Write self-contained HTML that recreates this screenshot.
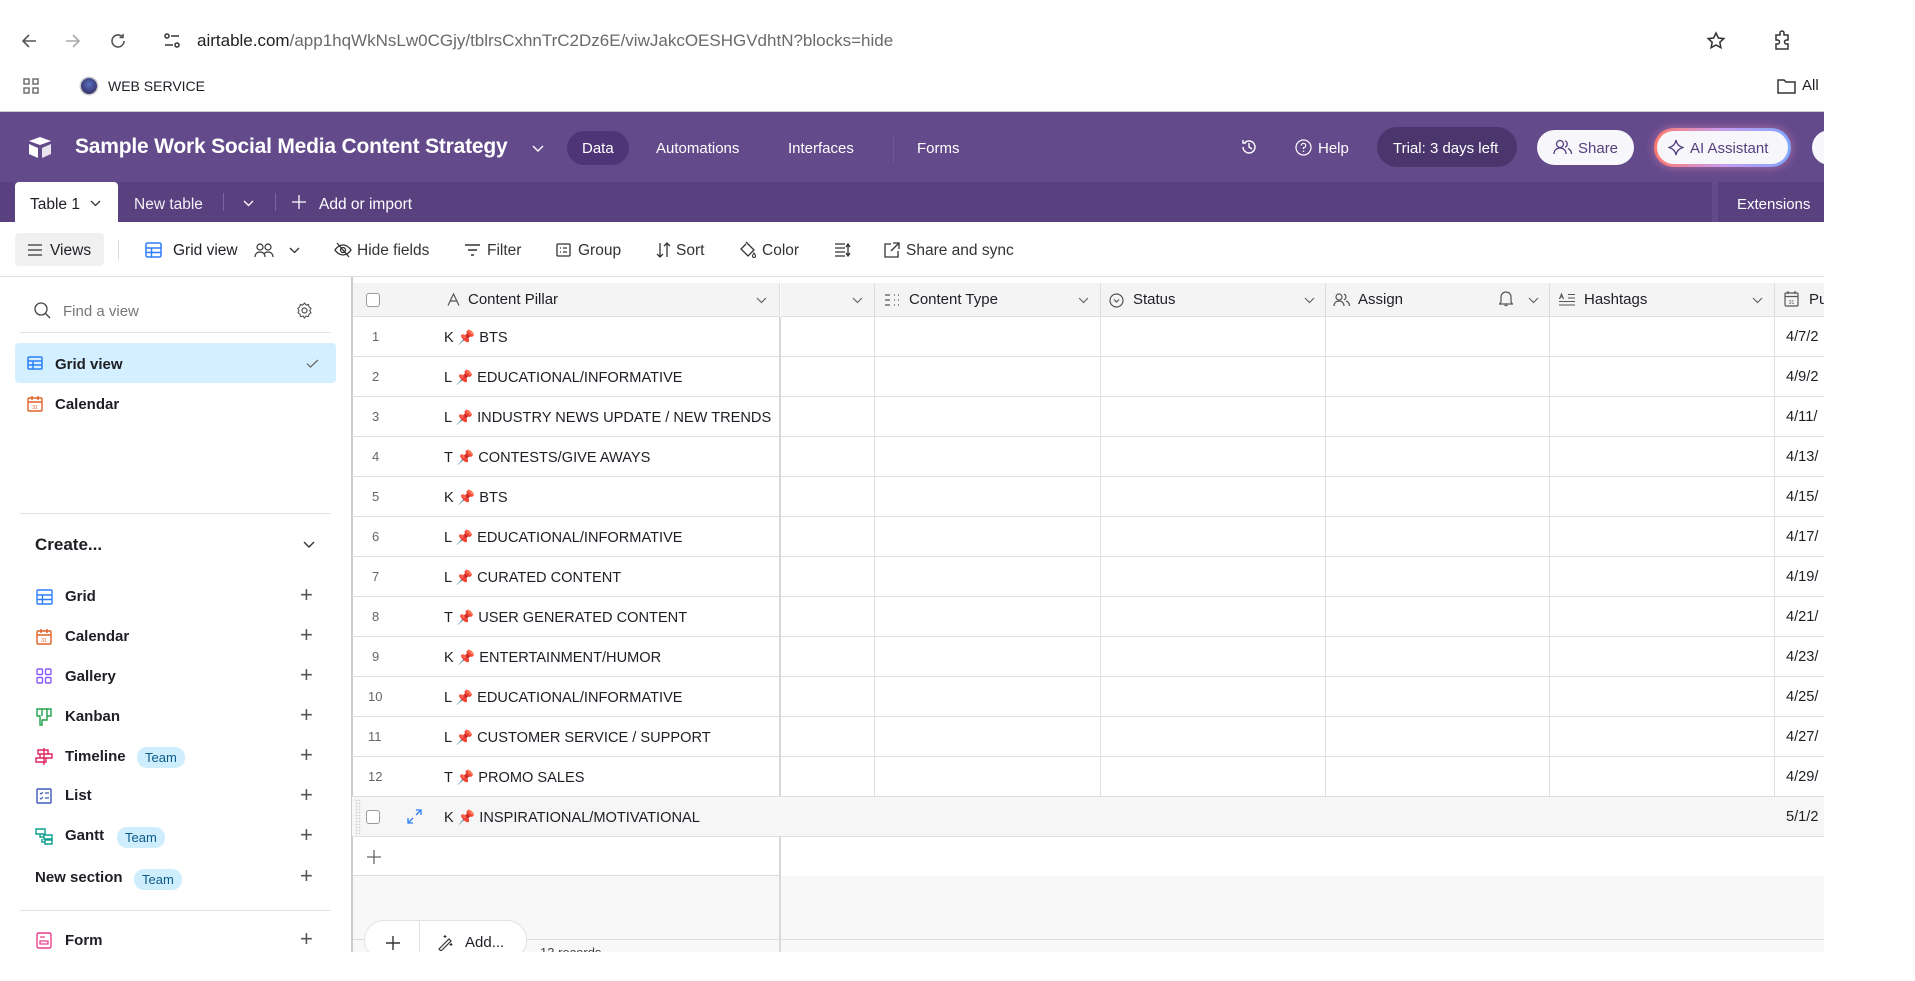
<!DOCTYPE html>
<html><head><meta charset="utf-8">
<style>
*{box-sizing:border-box;margin:0;padding:0}
body{width:1915px;height:981px;background:#fff;font-family:"Liberation Sans",sans-serif;color:#1d1f25;position:relative;overflow:hidden}
.a{position:absolute;white-space:nowrap}
.hdr{position:absolute;left:0;top:112px;width:1824px;height:70px;background:#634a8b}
.tabs{position:absolute;left:0;top:182px;width:1824px;height:40px;background:#594180}
.w{color:#fff}
.ico{position:absolute}
.col{position:absolute;top:283px;height:34px;background:#f4f4f4;border-right:1px solid #dedede;border-bottom:1px solid #dedede;font-size:14px;line-height:34px;color:#1d1f25}
.row{position:absolute;left:352px;width:1472px;height:40px;border-bottom:1px solid #e0e0e0;font-size:14px;line-height:40px}
.side{font-size:14px;color:#1d1f25}
.team{position:absolute;background:#cfeefd;color:#0b5c8a;font-size:13px;border-radius:10px;padding:0 8px;line-height:21px}
.plus{position:absolute;left:300px;font-size:22px;color:#555;font-weight:300}
.tb{position:absolute;top:242px;font-size:15.5px;color:#333;white-space:nowrap}
</style></head><body>

<!-- browser chrome -->
<svg class="ico" style="left:20px;top:32px" width="18" height="18" viewBox="0 0 18 18"><path d="M16 9H3M9 3L3 9l6 6" stroke="#555" stroke-width="1.6" fill="none"/></svg>
<svg class="ico" style="left:64px;top:32px" width="18" height="18" viewBox="0 0 18 18"><path d="M2 9h13M9 3l6 6-6 6" stroke="#aaa" stroke-width="1.6" fill="none"/></svg>
<svg class="ico" style="left:109px;top:32px" width="18" height="18" viewBox="0 0 18 18"><path d="M15 9a6 6 0 1 1-2-4.5M14 2v3.5h-3.5" stroke="#555" stroke-width="1.6" fill="none"/></svg>
<svg class="ico" style="left:163px;top:32px" width="18" height="18" viewBox="0 0 18 18"><circle cx="4" cy="4" r="2" fill="none" stroke="#333" stroke-width="1.5"/><path d="M8 4h8M2 13h8" stroke="#333" stroke-width="1.5"/><circle cx="14" cy="13" r="2" fill="none" stroke="#333" stroke-width="1.5"/></svg>
<div class="a" style="left:197px;top:31px;font-size:17px;color:#202124">airtable.com<span style="color:#6a6a6a">/app1hqWkNsLw0CGjy/tblrsCxhnTrC2Dz6E/viwJakcOESHGVdhtN?blocks=hide</span></div>
<svg class="ico" style="left:1706px;top:31px" width="20" height="20" viewBox="0 0 20 20"><path d="M10 2l2.4 5 5.4.6-4 3.7 1.1 5.4L10 14l-4.9 2.7 1.1-5.4-4-3.7 5.4-.6z" fill="none" stroke="#333" stroke-width="1.5"/></svg>
<svg class="ico" style="left:1772px;top:30px" width="20" height="22" viewBox="0 0 20 22"><path d="M4 5h4V3a2 2 0 0 1 4 0v2h4v5h-1.5a2 2 0 0 0 0 4H16v5H4v-5h1.5a2 2 0 0 0 0-4H4z" fill="none" stroke="#333" stroke-width="1.5"/></svg>
<svg class="ico" style="left:23px;top:78px" width="16" height="16" viewBox="0 0 16 16"><g fill="none" stroke="#666" stroke-width="1.4"><rect x="1" y="1" width="5" height="5"/><rect x="10" y="1" width="5" height="5"/><rect x="1" y="10" width="5" height="5"/><rect x="10" y="10" width="5" height="5"/></g></svg>
<div class="a" style="left:81px;top:78px;width:16px;height:16px;border-radius:50%;background:radial-gradient(circle at 50% 40%,#5a6fc0,#2a1f4e);box-shadow:0 0 0 1.5px #ccc"></div>
<div class="a" style="left:108px;top:78px;font-size:14px">WEB SERVICE</div>
<svg class="ico" style="left:1777px;top:78px" width="19" height="16" viewBox="0 0 19 16"><path d="M1 2h6l2 2h9v11H1z" fill="none" stroke="#333" stroke-width="1.5"/></svg>
<div class="a" style="left:1802px;top:77px;font-size:15px">All</div>
<div class="a" style="left:0;top:111px;width:1824px;height:1px;background:#ccc"></div>

<!-- header -->
<div class="hdr"></div>
<svg class="ico" style="left:27px;top:136px" width="26" height="24" viewBox="0 0 26 24"><path d="M13 1L2 5l11 4 11-4z" fill="#fff"/><path d="M2 8v10l9 4V12z" fill="#fff"/><path d="M15 12v10l9-4V8z" fill="#fff" opacity=".85"/></svg>
<div class="a w" style="left:75px;top:135px;font-size:21px;font-weight:bold;letter-spacing:-0.2px">Sample Work Social Media Content Strategy</div>
<svg class="ico" style="left:532px;top:145px" width="12" height="8" viewBox="0 0 12 8"><path d="M1 1l5 5 5-5" stroke="#fff" stroke-width="1.4" fill="none"/></svg>
<div class="a" style="left:567px;top:131px;width:62px;height:34px;border-radius:17px;background:#4e3577"></div>
<div class="a w" style="left:582px;top:140px;font-size:15px">Data</div>
<div class="a w" style="left:656px;top:140px;font-size:15px">Automations</div>
<div class="a w" style="left:788px;top:140px;font-size:15px">Interfaces</div>
<div class="a" style="left:893px;top:135px;width:1px;height:28px;background:#6f579a"></div>
<div class="a w" style="left:917px;top:140px;font-size:15px">Forms</div>
<svg class="ico" style="left:1240px;top:138px" width="18" height="18" viewBox="0 0 18 18"><path d="M3 9a6 6 0 1 0 2-4.5M3 2v3h3M9 5v4l3 2" stroke="#fff" stroke-width="1.4" fill="none"/></svg>
<svg class="ico" style="left:1295px;top:139px" width="17" height="17" viewBox="0 0 17 17"><circle cx="8.5" cy="8.5" r="7.5" fill="none" stroke="#fff" stroke-width="1.2"/><path d="M6.3 6.5a2.2 2.2 0 1 1 2.2 2.2V10" stroke="#fff" stroke-width="1.2" fill="none"/><circle cx="8.5" cy="12.3" r=".8" fill="#fff"/></svg>
<div class="a w" style="left:1318px;top:140px;font-size:15px">Help</div>
<div class="a" style="left:1377px;top:127px;width:140px;height:40px;border-radius:20px;background:#4a356d"></div>
<div class="a w" style="left:1393px;top:140px;font-size:15px">Trial: 3 days left</div>
<div class="a" style="left:1537px;top:130px;width:97px;height:35px;border-radius:18px;background:#f7f6fa"></div>
<svg class="ico" style="left:1553px;top:139px" width="20" height="16" viewBox="0 0 20 16"><circle cx="7" cy="5" r="3.5" fill="none" stroke="#553f80" stroke-width="1.3"/><path d="M1 15c0-4 3-6 6-6s6 2 6 6M12 1.8a3.5 3.5 0 0 1 0 6.5M15 9.5c2 1 3.5 3 3.5 5.5" fill="none" stroke="#553f80" stroke-width="1.3"/></svg>
<div class="a" style="left:1578px;top:140px;font-size:15px;color:#553f80">Share</div>
<div class="a" style="left:1654px;top:128px;width:137px;height:39px;border-radius:20px;background:linear-gradient(90deg,#ff7a6b,#c89cf0,#7fa8ff);box-shadow:0 0 10px rgba(255,150,200,.5)"></div>
<div class="a" style="left:1657px;top:131px;width:131px;height:33px;border-radius:17px;background:#f7f6fa"></div>
<svg class="ico" style="left:1668px;top:139px" width="16" height="17" viewBox="0 0 16 17"><path d="M8 1c.6 4 2.5 6.3 7 7.5-4.5 1.2-6.4 3.5-7 7.5-.6-4-2.5-6.3-7-7.5C5.5 7.3 7.4 5 8 1z" fill="none" stroke="#553f80" stroke-width="1.3"/></svg>
<div class="a" style="left:1690px;top:140px;font-size:15px;color:#553f80">AI Assistant</div>
<div class="a" style="left:1812px;top:130px;width:30px;height:35px;border-radius:18px 0 0 18px;background:#f7f6fa"></div>
<div class="a" style="left:1824px;top:112px;width:91px;height:115px;background:#fff"></div>

<!-- tabs -->
<div class="tabs"></div>
<div class="a" style="left:1712px;top:182px;width:6px;height:40px;background:#634a8b"></div>
<div class="a" style="left:15px;top:182px;width:103px;height:40px;background:#fff;border-radius:4px 4px 0 0"></div>
<div class="a" style="left:30px;top:196px;font-size:15.5px">Table 1</div>
<svg class="ico" style="left:90px;top:200px" width="11" height="7" viewBox="0 0 11 7"><path d="M1 1l4.5 4.5L10 1" stroke="#333" stroke-width="1.3" fill="none"/></svg>
<div class="a w" style="left:134px;top:196px;font-size:15.5px;opacity:.92">New table</div>
<div class="a" style="left:223px;top:193px;width:1px;height:18px;background:#7a65a0"></div>
<svg class="ico" style="left:243px;top:200px" width="11" height="7" viewBox="0 0 11 7"><path d="M1 1l4.5 4.5L10 1" stroke="#fff" stroke-width="1.3" fill="none"/></svg>
<div class="a" style="left:275px;top:193px;width:1px;height:18px;background:#7a65a0"></div>
<svg class="ico" style="left:292px;top:195px" width="14" height="14" viewBox="0 0 14 14"><path d="M7 0v14M0 7h14" stroke="#fff" stroke-width="1.3"/></svg>
<div class="a w" style="left:319px;top:196px;font-size:15.5px">Add or import</div>
<div class="a w" style="left:1737px;top:196px;font-size:15px">Extensions</div>

<!-- toolbar -->
<div class="a" style="left:15px;top:233px;width:89px;height:33px;border-radius:4px;background:#f0f0f0"></div>
<svg class="ico" style="left:28px;top:244px" width="14" height="12" viewBox="0 0 14 12"><path d="M0 1h14M0 6h14M0 11h14" stroke="#333" stroke-width="1.3"/></svg>
<div class="tb" style="left:50px;color:#1d1f25">Views</div>
<div class="a" style="left:118px;top:240px;width:1px;height:20px;background:#ddd"></div>
<svg class="ico" style="left:145px;top:242px" width="17" height="16" viewBox="0 0 17 16"><rect x="1" y="1" width="15" height="14" rx="1.5" fill="none" stroke="#2d7ff9" stroke-width="1.5"/><path d="M1 6h15M1 10.5h15M6.5 6v9" stroke="#2d7ff9" stroke-width="1.5"/></svg>
<div class="tb" style="left:173px;color:#1d1f25">Grid view</div>
<svg class="ico" style="left:254px;top:242px" width="20" height="16" viewBox="0 0 20 16"><circle cx="6" cy="5" r="3" fill="none" stroke="#333" stroke-width="1.2"/><circle cx="14" cy="5" r="3" fill="none" stroke="#333" stroke-width="1.2"/><path d="M1 15c0-3 2-5 5-5s5 2 5 5M10 12c1-1.5 2.5-2 4-2 3 0 5 2 5 5" fill="none" stroke="#333" stroke-width="1.2"/></svg>
<svg class="ico" style="left:289px;top:247px" width="11" height="7" viewBox="0 0 11 7"><path d="M1 1l4.5 4.5L10 1" stroke="#333" stroke-width="1.3" fill="none"/></svg>
<svg class="ico" style="left:334px;top:242px" width="18" height="16" viewBox="0 0 18 16"><path d="M1 8s3-5 8-5 8 5 8 5-3 5-8 5-8-5-8-5z" fill="none" stroke="#333" stroke-width="1.3"/><circle cx="9" cy="8" r="2.5" fill="none" stroke="#333" stroke-width="1.3"/><path d="M3 1l12 14" stroke="#333" stroke-width="1.3"/></svg>
<div class="tb" style="left:357px">Hide fields</div>
<svg class="ico" style="left:465px;top:244px" width="15" height="12" viewBox="0 0 15 12"><path d="M0 1h15M3 6h9M6 11h3" stroke="#333" stroke-width="1.4"/></svg>
<div class="tb" style="left:487px">Filter</div>
<svg class="ico" style="left:556px;top:243px" width="15" height="14" viewBox="0 0 15 14"><rect x="1" y="1" width="13" height="12" rx="1" fill="none" stroke="#333" stroke-width="1.3"/><path d="M4 5h1M4 9h1M7 5h4M7 9h4" stroke="#333" stroke-width="1.3"/></svg>
<div class="tb" style="left:578px">Group</div>
<svg class="ico" style="left:656px;top:242px" width="15" height="16" viewBox="0 0 15 16"><path d="M4 1v14M1 12l3 3 3-3M11 15V1M8 4l3-3 3 3" stroke="#333" stroke-width="1.3" fill="none"/></svg>
<div class="tb" style="left:676px">Sort</div>
<svg class="ico" style="left:739px;top:241px" width="18" height="18" viewBox="0 0 18 18"><path d="M7 1l8 8-6 6-7-7 5-5" fill="none" stroke="#333" stroke-width="1.3"/><path d="M15 12c1 1.5 1.5 2.5 1.5 3a1.5 1.5 0 0 1-3 0c0-.5.5-1.5 1.5-3z" fill="none" stroke="#333" stroke-width="1.1"/></svg>
<div class="tb" style="left:762px">Color</div>
<svg class="ico" style="left:835px;top:243px" width="16" height="14" viewBox="0 0 16 14"><path d="M0 1h10M0 5h10M0 9h10M0 13h10M13 1v12M11 4l2-3 2 3M11 10l2 3 2-3" stroke="#333" stroke-width="1.3" fill="none"/></svg>
<svg class="ico" style="left:884px;top:242px" width="16" height="16" viewBox="0 0 16 16"><path d="M7 2H1v13h13V9M9 1h6v6M15 1L7 9" stroke="#333" stroke-width="1.3" fill="none"/></svg>
<div class="tb" style="left:906px">Share and sync</div>
<div class="a" style="left:0;top:276px;width:1824px;height:1px;background:#ddd"></div>

<!-- sidebar -->
<svg class="ico" style="left:34px;top:302px" width="17" height="17" viewBox="0 0 17 17"><circle cx="7" cy="7" r="6" fill="none" stroke="#444" stroke-width="1.3"/><path d="M11.5 11.5L16 16" stroke="#444" stroke-width="1.3"/></svg>
<div class="a" style="left:63px;top:303px;font-size:15px;color:#777">Find a view</div>
<svg class="ico" style="left:296px;top:302px" width="17" height="17" viewBox="0 0 17 17"><circle cx="8.5" cy="8.5" r="2.5" fill="none" stroke="#555" stroke-width="1.2"/><path d="M8.5 1l1.5 2 2.4-.6.6 2.4 2 1.5-1.2 2.2 1.2 2.2-2 1.5-.6 2.4-2.4-.6-1.5 2-1.5-2-2.4.6-.6-2.4-2-1.5L3 8.5 1.8 6.3l2-1.5.6-2.4 2.4.6z" fill="none" stroke="#555" stroke-width="1.1"/></svg>
<div class="a" style="left:20px;top:332px;width:311px;height:1px;background:#e4e4e4"></div>
<div class="a" style="left:15px;top:343px;width:321px;height:40px;border-radius:4px;background:#d4efff"></div>
<svg class="ico" style="left:27px;top:356px" width="16" height="14" viewBox="0 0 16 14"><rect x="1" y="1" width="14" height="12" rx="1" fill="none" stroke="#2d7ff9" stroke-width="1.5"/><path d="M1 5h14M1 9h14M6 5v8" stroke="#2d7ff9" stroke-width="1.5"/></svg>
<div class="a" style="left:55px;top:356px;font-size:15px;font-weight:bold">Grid view</div>
<svg class="ico" style="left:306px;top:359px" width="13" height="9" viewBox="0 0 13 9"><path d="M1 4.5l3.5 3.5L12 1" stroke="#666" stroke-width="1.2" fill="none"/></svg>
<svg class="ico" style="left:27px;top:395px" width="16" height="17" viewBox="0 0 16 17"><rect x="1" y="3" width="14" height="13" rx="1" fill="none" stroke="#e0622a" stroke-width="1.4"/><path d="M1 7h14M5 1v4M11 1v4" stroke="#e0622a" stroke-width="1.4"/><text x="8" y="14" font-size="5" text-anchor="middle" fill="#e0622a" font-family="Liberation Sans">31</text></svg>
<div class="a" style="left:55px;top:396px;font-size:15px;font-weight:bold">Calendar</div>
<div class="a" style="left:20px;top:513px;width:311px;height:1px;background:#e4e4e4"></div>
<div class="a" style="left:35px;top:535px;font-size:17px;font-weight:bold">Create...</div>
<svg class="ico" style="left:303px;top:541px" width="12" height="8" viewBox="0 0 12 8"><path d="M1 1l5 5 5-5" stroke="#333" stroke-width="1.4" fill="none"/></svg>

<svg class="ico" style="left:36px;top:589px" width="17" height="16" viewBox="0 0 17 16"><rect x="1" y="1" width="15" height="14" rx="1" fill="none" stroke="#2d7ff9" stroke-width="1.4"/><path d="M1 6h15M1 10.5h15M6.5 6v9" stroke="#2d7ff9" stroke-width="1.4"/></svg>
<div class="a side" style="left:65px;top:588px;font-size:15px;font-weight:bold">Grid</div>
<div class="plus" style="top:582px">+</div>
<svg class="ico" style="left:36px;top:628px" width="16" height="17" viewBox="0 0 16 17"><rect x="1" y="3" width="14" height="13" rx="1" fill="none" stroke="#e0622a" stroke-width="1.4"/><path d="M1 7h14M5 1v4M11 1v4" stroke="#e0622a" stroke-width="1.4"/><text x="8" y="14" font-size="5" text-anchor="middle" fill="#e0622a" font-family="Liberation Sans">31</text></svg>
<div class="a side" style="left:65px;top:628px;font-size:15px;font-weight:bold">Calendar</div>
<div class="plus" style="top:622px">+</div>
<svg class="ico" style="left:36px;top:668px" width="16" height="16" viewBox="0 0 16 16"><g fill="none" stroke="#8b5cf6" stroke-width="1.4"><rect x="1" y="1" width="5.5" height="5.5" rx="1"/><rect x="9.5" y="1" width="5.5" height="5.5" rx="1"/><rect x="1" y="9.5" width="5.5" height="5.5" rx="1"/><rect x="9.5" y="9.5" width="5.5" height="5.5" rx="1"/></g></svg>
<div class="a side" style="left:65px;top:668px;font-size:15px;font-weight:bold">Gallery</div>
<div class="plus" style="top:662px">+</div>
<svg class="ico" style="left:36px;top:708px" width="16" height="18" viewBox="0 0 16 18"><path d="M1 1h14v7h-4v4H6v5H4V8H1z" fill="none" stroke="#20a34a" stroke-width="1.4"/><path d="M6 1v7M11 1v7" stroke="#20a34a" stroke-width="1.4"/></svg>
<div class="a side" style="left:65px;top:708px;font-size:15px;font-weight:bold">Kanban</div>
<div class="plus" style="top:702px">+</div>
<svg class="ico" style="left:35px;top:747px" width="18" height="19" viewBox="0 0 18 19"><path d="M9 1v17M3 3h10v4H3zM5 7h12v4H5zM1 11h10v4H1z" fill="none" stroke="#e0245e" stroke-width="1.4"/></svg>
<div class="a side" style="left:65px;top:748px;font-size:15px;font-weight:bold">Timeline</div>
<div class="team" style="left:137px;top:747px">Team</div>
<div class="plus" style="top:742px">+</div>
<svg class="ico" style="left:36px;top:788px" width="16" height="16" viewBox="0 0 16 16"><rect x="1" y="1" width="14" height="14" rx="1" fill="none" stroke="#3b5bb5" stroke-width="1.4"/><path d="M4 5l1 1 2-2M4 10l1 1 2-2M9 5h4M9 10h4" stroke="#3b5bb5" stroke-width="1.2" fill="none"/></svg>
<div class="a side" style="left:65px;top:787px;font-size:15px;font-weight:bold">List</div>
<div class="plus" style="top:782px">+</div>
<svg class="ico" style="left:35px;top:828px" width="18" height="17" viewBox="0 0 18 17"><path d="M1 1h9v5H1zM5 6v3h4M9 7h8v4H9zM7 11v3h3M10 12h7v4h-7z" fill="none" stroke="#0e9f8f" stroke-width="1.4"/></svg>
<div class="a side" style="left:65px;top:827px;font-size:15px;font-weight:bold">Gantt</div>
<div class="team" style="left:117px;top:827px">Team</div>
<div class="plus" style="top:822px">+</div>
<div class="a side" style="left:35px;top:869px;font-size:15px;font-weight:bold">New section</div>
<div class="team" style="left:134px;top:869px">Team</div>
<div class="plus" style="top:863px">+</div>
<div class="a" style="left:20px;top:910px;width:311px;height:1px;background:#e4e4e4"></div>
<svg class="ico" style="left:36px;top:932px" width="16" height="17" viewBox="0 0 16 17"><rect x="1" y="1" width="14" height="15" rx="1.5" fill="none" stroke="#e83e8c" stroke-width="1.4"/><path d="M4 5h5M4 9h8v3H4z" stroke="#e83e8c" stroke-width="1.3" fill="none"/></svg>
<div class="a side" style="left:65px;top:932px;font-size:15px;font-weight:bold">Form</div>
<div class="plus" style="top:926px">+</div>

<!-- grid -->
<div class="a" style="left:351px;top:277px;width:2px;height:675px;background:#ccc"></div>
<div class="a" style="left:353px;top:876px;width:1471px;height:76px;background:#f8f8f8"></div>
<div class="col" style="left:353px;width:427px"></div>
<div class="a" style="left:366px;top:293px;width:14px;height:14px;border:1.5px solid #999;border-radius:3px;background:#fff"></div>
<svg class="ico" style="left:447px;top:293px" width="13" height="13" viewBox="0 0 13 13"><path d="M1 12.5L6.5 1 12 12.5M3.5 8h6" stroke="#555" stroke-width="1.2" fill="none"/></svg>
<div class="a" style="left:468px;top:283px;font-size:15px;line-height:34px">Content Pillar</div>
<svg class="ico" style="left:756px;top:297px" width="11" height="7" viewBox="0 0 11 7"><path d="M1 1l4.5 4.5L10 1" stroke="#666" stroke-width="1.2" fill="none"/></svg>
<div class="col" style="left:781px;width:94px"></div>
<svg class="ico" style="left:852px;top:297px" width="11" height="7" viewBox="0 0 11 7"><path d="M1 1l4.5 4.5L10 1" stroke="#666" stroke-width="1.2" fill="none"/></svg>
<div class="col" style="left:875px;width:226px"></div>
<svg class="ico" style="left:885px;top:294px" width="15" height="12" viewBox="0 0 15 12"><path d="M0 1h5M0 6h5M0 11h5M9 1h1M13 1h1M9 6h1M13 6h1M9 11h1M13 11h1" stroke="#555" stroke-width="1.3"/></svg>
<div class="a" style="left:909px;top:283px;font-size:15px;line-height:34px">Content Type</div>
<svg class="ico" style="left:1078px;top:297px" width="11" height="7" viewBox="0 0 11 7"><path d="M1 1l4.5 4.5L10 1" stroke="#666" stroke-width="1.2" fill="none"/></svg>
<div class="col" style="left:1101px;width:225px"></div>
<svg class="ico" style="left:1109px;top:293px" width="15" height="15" viewBox="0 0 15 15"><circle cx="7.5" cy="7.5" r="6.5" fill="none" stroke="#555" stroke-width="1.2"/><path d="M5 6.5l2.5 2.5L10 6.5" stroke="#555" stroke-width="1.2" fill="none"/></svg>
<div class="a" style="left:1133px;top:283px;font-size:15px;line-height:34px">Status</div>
<svg class="ico" style="left:1304px;top:297px" width="11" height="7" viewBox="0 0 11 7"><path d="M1 1l4.5 4.5L10 1" stroke="#666" stroke-width="1.2" fill="none"/></svg>
<div class="col" style="left:1326px;width:224px"></div>
<svg class="ico" style="left:1333px;top:293px" width="18" height="14" viewBox="0 0 18 14"><circle cx="6" cy="4" r="3" fill="none" stroke="#555" stroke-width="1.2"/><path d="M1 13c0-3 2-5 5-5s5 2 5 5M11 1.2a3 3 0 0 1 0 5.6M13 8c2 .7 3.5 2.5 3.5 5" fill="none" stroke="#555" stroke-width="1.2"/></svg>
<div class="a" style="left:1358px;top:283px;font-size:15px;line-height:34px">Assign</div>
<svg class="ico" style="left:1499px;top:290px" width="14" height="17" viewBox="0 0 14 17"><path d="M2 12V7a5 5 0 0 1 10 0v5l1.5 2h-13zM5.5 15.5h3" fill="none" stroke="#555" stroke-width="1.2"/></svg>
<svg class="ico" style="left:1528px;top:297px" width="11" height="7" viewBox="0 0 11 7"><path d="M1 1l4.5 4.5L10 1" stroke="#666" stroke-width="1.2" fill="none"/></svg>
<div class="col" style="left:1550px;width:225px"></div>
<svg class="ico" style="left:1559px;top:293px" width="16" height="13" viewBox="0 0 16 13"><path d="M0 12h16M0 8.5h16M9 5h7M9 1.5h7M0.5 6L2.5 1l2 5M1.3 4h2.4" stroke="#555" stroke-width="1.1" fill="none"/></svg>
<div class="a" style="left:1584px;top:283px;font-size:15px;line-height:34px">Hashtags</div>
<svg class="ico" style="left:1752px;top:297px" width="11" height="7" viewBox="0 0 11 7"><path d="M1 1l4.5 4.5L10 1" stroke="#666" stroke-width="1.2" fill="none"/></svg>
<div class="col" style="left:1775px;width:49px;border-right:none"></div>
<svg class="ico" style="left:1784px;top:290px" width="15" height="17" viewBox="0 0 15 17"><rect x="1" y="3" width="13" height="13" rx="1" fill="none" stroke="#555" stroke-width="1.2"/><path d="M1 6.5h13M4 1v3M11 1v3" stroke="#555" stroke-width="1.2"/><text x="7.5" y="14" font-size="5" text-anchor="middle" fill="#555" font-family="Liberation Sans">31</text></svg>
<div class="a" style="left:1809px;top:283px;font-size:15px;line-height:34px;width:15px;overflow:hidden">Pu</div>

<div class="a" style="left:779px;top:317px;width:2px;height:635px;background:#d8d8d8"></div>
<div class="a" style="left:874px;top:317px;width:1px;height:520px;background:#e0e0e0"></div>
<div class="a" style="left:1100px;top:317px;width:1px;height:520px;background:#e0e0e0"></div>
<div class="a" style="left:1325px;top:317px;width:1px;height:520px;background:#e0e0e0"></div>
<div class="a" style="left:1549px;top:317px;width:1px;height:520px;background:#e0e0e0"></div>
<div class="a" style="left:1774px;top:317px;width:1px;height:520px;background:#e0e0e0"></div>

<div id="rows"></div>
<script>
var d=[["1","K","BTS","4/7/2"],["2","L","EDUCATIONAL/INFORMATIVE","4/9/2"],["3","L","INDUSTRY NEWS UPDATE / NEW TRENDS","4/11/"],["4","T","CONTESTS/GIVE AWAYS","4/13/"],["5","K","BTS","4/15/"],["6","L","EDUCATIONAL/INFORMATIVE","4/17/"],["7","L","CURATED CONTENT","4/19/"],["8","T","USER GENERATED CONTENT","4/21/"],["9","K","ENTERTAINMENT/HUMOR","4/23/"],["10","L","EDUCATIONAL/INFORMATIVE","4/25/"],["11","L","CUSTOMER SERVICE / SUPPORT","4/27/"],["12","T","PROMO SALES","4/29/"],["13","K","INSPIRATIONAL/MOTIVATIONAL","5/1/2"]];
var h="";
d.forEach(function(r,i){var t=317+i*40;var last=i==12;
h+='<div class="row" style="top:'+t+'px;'+(last?'background:#f6f6f6':'')+'"></div>';
if(last){h+='<div class="a" style="left:366px;top:'+(t+13)+'px;width:14px;height:14px;border:1.5px solid #999;border-radius:3px;background:#fff"></div><svg class="ico" style="left:407px;top:'+(t+12)+'px" width="15" height="15" viewBox="0 0 15 15"><path d="M9 1h5v5M14 1L9 6M6 14H1V9M1 14l5-5" stroke="#2d7ff9" stroke-width="1.3" fill="none"/></svg><div class="a" style="left:355px;top:'+(t+2)+'px;width:6px;height:36px;background:radial-gradient(#ccc 35%,transparent 40%) 0 0/3px 3px"></div>';}
else h+='<div class="a" style="left:'+(r[0].length>1?368:372)+'px;top:'+t+'px;line-height:40px;font-size:13px;color:#666">'+r[0]+'</div>';
h+='<div class="a" style="left:444px;top:'+t+'px;line-height:40px;font-size:14.6px">'+r[1]+' <span style="color:#e0202a;font-size:14px">&#x1F4CC;</span> '+r[2]+'</div>';
h+='<div class="a" style="left:1786px;top:'+t+'px;line-height:40px;font-size:14.6px;width:38px;overflow:hidden">'+r[3]+'</div>';
});
document.getElementById("rows").innerHTML=h;
</script>
<div class="a" style="left:353px;top:837px;width:426px;height:39px;background:#fff;border-bottom:1px solid #ddd"></div>
<svg class="ico" style="left:367px;top:850px" width="14" height="14" viewBox="0 0 14 14"><path d="M7 0v14M0 7h14" stroke="#666" stroke-width="1.3"/></svg>
<div class="a" style="left:353px;top:939px;width:1471px;height:1px;background:#ddd"></div>
<div class="a" style="left:364px;top:920px;width:163px;height:40px;border-radius:20px;background:#fff;border:1px solid #e2e2e2"></div>
<div class="a" style="left:419px;top:921px;width:1px;height:32px;background:#e2e2e2"></div>
<svg class="ico" style="left:386px;top:936px" width="14" height="14" viewBox="0 0 14 14"><path d="M7 0v14M0 7h14" stroke="#333" stroke-width="1.4"/></svg>
<svg class="ico" style="left:437px;top:934px" width="17" height="17" viewBox="0 0 17 17"><path d="M2 15L12 5l2 2L4 17z" fill="none" stroke="#333" stroke-width="1.2"/><path d="M8 1v3M6.5 2.5h3M14 9v3M12.5 10.5h3" stroke="#333" stroke-width="1.1"/></svg>
<div class="a" style="left:465px;top:934px;font-size:15px">Add...</div>
<div class="a" style="left:0;top:952px;width:1915px;height:29px;background:#fff"></div>
<div class="a" style="left:540px;top:946px;font-size:13px;color:#444;height:6px;overflow:hidden;line-height:14px">13 records</div>
</body></html>
